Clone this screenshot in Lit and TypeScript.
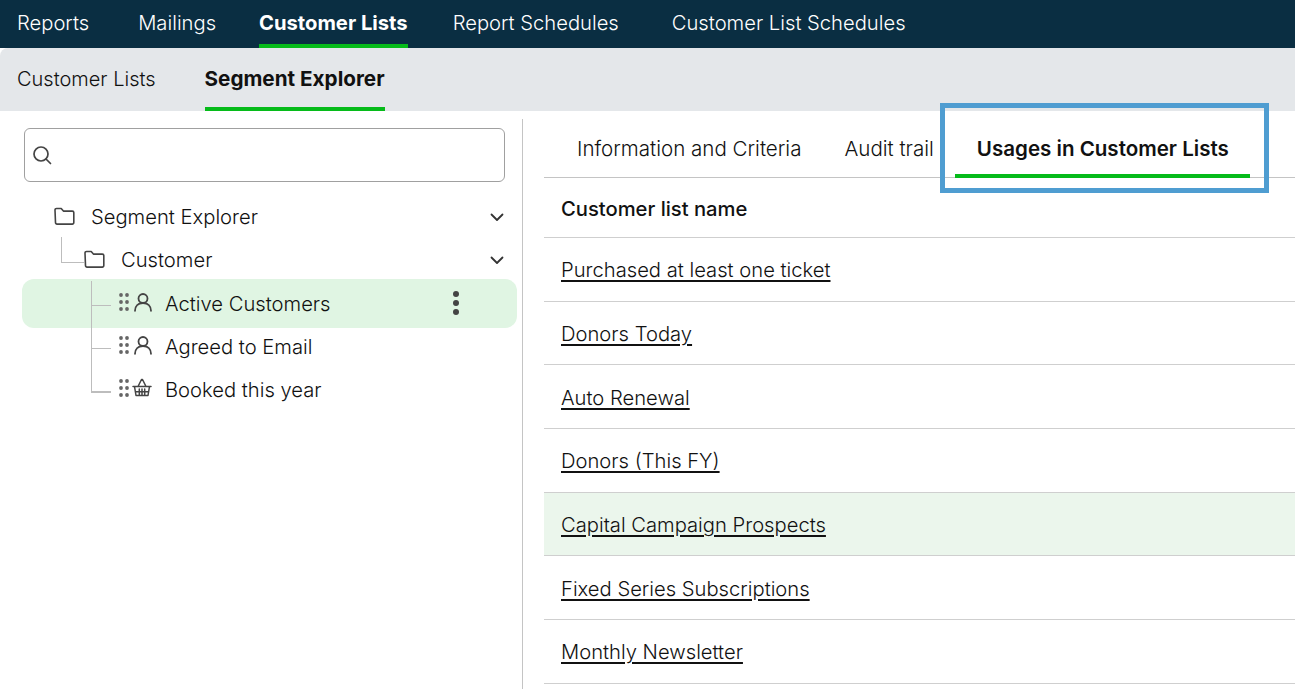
import { LitElement, html, css, svg } from 'lit';
import { customElement } from 'lit/decorators.js';

const folderIcon = html`<svg class="ico" width="22" height="20" viewBox="0 0 22 20" fill="none" stroke="#444" stroke-width="1.6" stroke-linejoin="round">
  <path d="M1 4a1.500 1.500 0 0 1 1.500-1.500h4.700l2.200 2.600h8.900a1.500 1.500 0 0 1 1.500 1.500v10a1.500 1.500 0 0 1-1.500 1.500h-15.300a1.500 1.500 0 0 1-1.500-1.500z" />
</svg>`;

const chevron = html`<svg class="chev" width="14" height="9" viewBox="0 0 14 9" fill="none" stroke="#333" stroke-width="1.8" stroke-linecap="round" stroke-linejoin="round"><path d="M1.500 1.500 7 7l5.500-5.500" /></svg>`;

const gripIcon = html`<svg class="grip" width="10" height="18" viewBox="0 0 10 18" fill="#666">
  ${[2, 9, 16].map((y) => svg`<circle cx="2" cy=${y} r="1.900" /><circle cx="8" cy=${y} r="1.900" />`)}
</svg>`;

const personIcon = html`<svg width="20" height="20" viewBox="0 0 20 20" fill="none" stroke="#444" stroke-width="1.800" stroke-linecap="round">
  <circle cx="10" cy="6.500" r="4.500" /><path d="M2 18.800c0-4.800 3.200-7.800 8-7.800s8 3 8 7.800" />
</svg>`;

const basketIcon = html`<svg class="basket" width="20" height="20" viewBox="0 0 20 20" fill="none" stroke="#444" stroke-width="1.500" stroke-linecap="round" stroke-linejoin="round">
  <path d="M1 8.500h18M2.500 8.500l1.500 9h12l1.500-9M6 8.500l3.500-7M14 8.500l-3.500-7M7.300 11v6.500M10 11v6.500M12.700 11v6.500M3.300 13.800h13.400" />
</svg>`;

const LISTS = [
  'Purchased at least one ticket',
  'Donors Today',
  'Auto Renewal',
  'Donors (This FY)',
  'Capital Campaign Prospects',
  'Fixed Series Subscriptions',
  'Monthly Newsletter',
];

@customElement('app-root')
export class AppRoot extends LitElement {
  static styles = css`
    :host {
      display: block;
      position: relative;
      height: 689px;
      overflow: hidden;
      background: #fff;
      font-family: 'Inter', 'Liberation Sans', sans-serif;
      font-size: 20.2px;
      font-weight: 300;
      color: #111;
    }
    .topbar {
      display: flex;
      height: 48px;
      background: #0a2e42;
      padding-left: 17px;
      color: #fff;
    }
    .topbar a {
      display: flex;
      align-items: center;
      height: 48px;
      box-sizing: border-box;
      padding-bottom: 4px;
    }
    .topbar a.on {
      font-weight: 700;
      border-bottom: 4px solid #06bb1a;
      padding-bottom: 0;
    }
    .t1 { margin-right: 49px; }
    .t2 { margin-right: 43px; }
    .t3 { margin-right: 45px; }
    .t4 { margin-right: 53px; }
    .subbar {
      display: flex;
      height: 63px;
      background: #e4e7ea;
      border-top-left-radius: 8px;
      padding-left: 17px;
    }
    .subbar a {
      display: flex;
      align-items: center;
      box-sizing: border-box;
      height: 63px;
      padding-bottom: 2px;
      font-size: 20px;
    }
    .subbar a.on {
      font-size: 20.7px;
      font-weight: 700;
      margin-left: 49px;
      border-bottom: 4px solid #06bb1a;
      padding-top: 2px;
      padding-bottom: 0;
    }
    .main {
      display: flex;
      height: 578px;
    }
    .left {
      box-sizing: border-box;
      width: 523px;
      margin-top: 8px;
      height: 570px;
      border-right: 1px solid #c4c4c4;
      padding: 9px 18px 0 22px;
    }
    .search {
      display: flex;
      align-items: center;
      box-sizing: border-box;
      width: 481px;
      height: 54px;
      margin-left: 2px;
      border: 1px solid #a0a0a0;
      border-radius: 6px;
      padding-left: 7px;
    }
    .tree {
      position: relative;
      margin-top: 14px;
      font-size: 20.2px;
    }
    .node {
      position: relative;
      display: flex;
      align-items: center;
      height: 43px;
    }
    .node.on::before {
      content: '';
      position: absolute;
      left: 0;
      top: -3px;
      width: 495px;
      height: 49px;
      border-radius: 12px;
      background: #e0f5e3;
    }
    .node > * { position: relative; }
    .lvl0 { padding-left: 32px; }
    .lvl1 { padding-left: 62px; }
    .lvl2 { padding-left: 97px; }
    .lvl0 .ico, .lvl1 .ico { margin-right: 15px; margin-top: -4px; }
    .lvl0 .name, .lvl1 .name { margin-top: -2px; }
    .chev { position: absolute; left: 468px; top: 17px; }
    .grip { margin-right: 4px; margin-top: -3px; }
    .iconbox { display: flex; margin-right: 12px; margin-top: -3px; }
    .basket { margin-left: -1px; margin-right: 1px; }
    .dots {
      position: absolute;
      left: 430px;
      top: 8px;
    }
    .line {
      position: absolute;
      background: #bdbdbd;
    }
    .right {
      flex: 1;
      padding: 8px 0 0 21px;
    }
    .tabs {
      display: flex;
      height: 59px;
      box-sizing: border-box;
      border-bottom: 1px solid #c4c4c4;
      padding-left: 33px;
      align-items: center;
      font-size: 20.55px;
    }
    .tabs span { padding-top: 1px; }
    .tabs .a { margin-right: 43px; }
    .tabs .tab-on {
      display: flex;
      align-items: center;
      box-sizing: border-box;
      height: 59px;
      margin-left: 21px;
      padding: 5px 21px 0 22px;
      font-weight: 600;
      border-bottom: 4px solid #06bb1a;
    }
    .row {
      display: flex;
      align-items: center;
      box-sizing: border-box;
      height: 63.7px;
      padding: 1px 0 0 17px;
      border-bottom: 1px solid #cfcfcf;
    }
    .row.head {
      height: 60px;
      font-weight: 500;
      padding-top: 2px;
    }
    .row.hi { background: #ebf6ec; }
    .row a {
      text-decoration: underline;
      text-underline-offset: 3px;
    }
    .callout {
      position: absolute;
      left: 940px;
      top: 103px;
      width: 329px;
      height: 90px;
      box-sizing: border-box;
      border: 5px solid #4f9dd1;
    }
  `;

  render() {
    return html`
      <nav class="topbar">
        <a class="t1">Reports</a>
        <a class="t2">Mailings</a>
        <a class="t3 on">Customer Lists</a>
        <a class="t4">Report Schedules</a>
        <a>Customer List Schedules</a>
      </nav>
      <nav class="subbar">
        <a>Customer Lists</a>
        <a class="on">Segment Explorer</a>
      </nav>
      <div class="main">
        <aside class="left">
          <div class="search">
            <svg width="20" height="20" viewBox="0 0 20 20" fill="none" stroke="#444" stroke-width="1.700" stroke-linecap="round">
              <circle cx="9" cy="9" r="7" /><path d="M14 14l4.500 4.500" />
            </svg>
          </div>
          <div class="tree">
            <span class="line" style="left:39px;top:41px;width:1px;height:26px"></span>
            <span class="line" style="left:39px;top:66px;width:23px;height:1px"></span>
            <div class="node lvl0">${folderIcon}<span class="name">Segment Explorer</span>${chevron}</div>
            <div class="node lvl1">${folderIcon}<span class="name">Customer</span>${chevron}</div>
            <div class="node lvl2 on">${gripIcon}<span class="iconbox">${personIcon}</span><span>Active Customers</span>
              <svg class="dots" width="8" height="26" viewBox="0 0 8 26" fill="#444"><circle cx="4" cy="4" r="3" /><circle cx="4" cy="13" r="3" /><circle cx="4" cy="22" r="3" /></svg>
            </div>
            <div class="node lvl2">${gripIcon}<span class="iconbox">${personIcon}</span><span>Agreed to Email</span></div>
            <div class="node lvl2">${gripIcon}<span class="iconbox">${basketIcon}</span><span>Booked this year</span></div>
            <span class="line" style="left:69px;top:85px;width:1px;height:112px"></span>
            <span class="line" style="left:69px;top:109px;width:20px;height:1px"></span>
            <span class="line" style="left:69px;top:152px;width:20px;height:1px"></span>
            <span class="line" style="left:69px;top:195px;width:20px;height:2px"></span>
          </div>
        </aside>
        <section class="right">
          <div class="tabs">
            <span class="a">Information and Criteria</span>
            <span>Audit trail</span>
            <span class="tab-on">Usages in Customer Lists</span>
          </div>
          <div class="row head">Customer list name</div>
          ${LISTS.map(
            (name, i) => html`<div class="row ${i === 4 ? 'hi' : ''}"><a>${name}</a></div>`,
          )}
        </section>
      </div>
      <div class="callout"></div>
    `;
  }
}
